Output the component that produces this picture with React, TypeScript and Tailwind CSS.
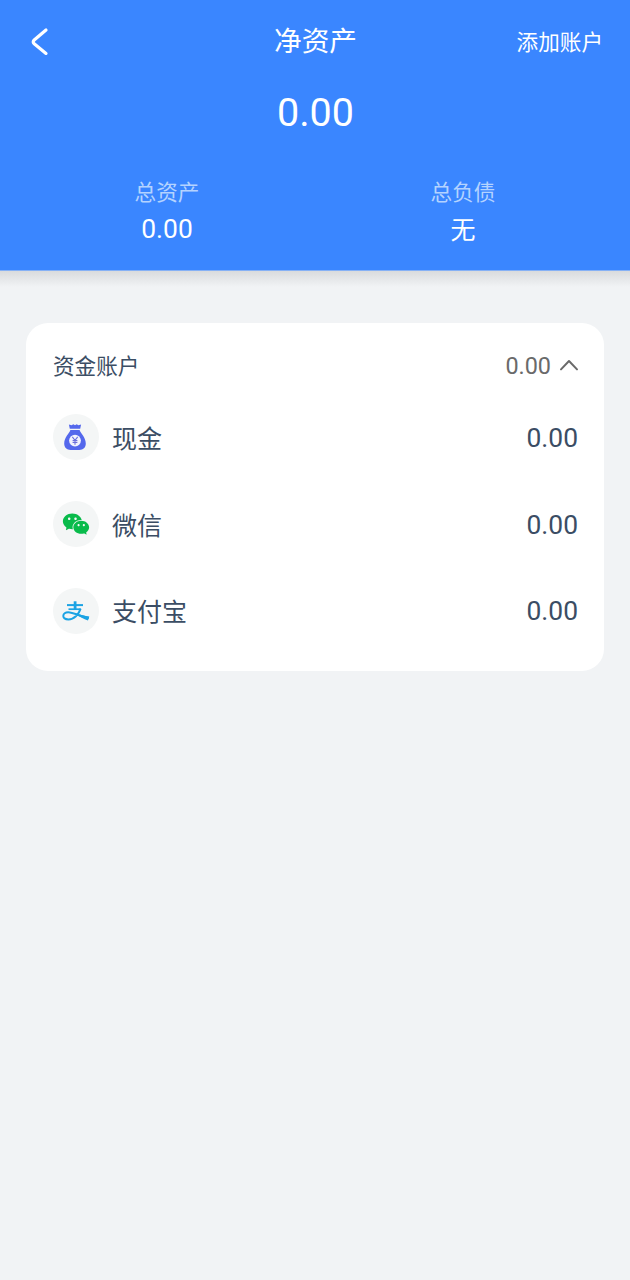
import type { ReactNode } from 'react'
import { AiFillWechat } from 'react-icons/ai'

function MoneyBagIcon() {
  return (
    <svg viewBox="0 0 24 28" className="mr-0.5 h-7 w-6" fill="none">
      <path
        d="M5.9 1.4 L8.6 2.3 L10.3 1.3 L12 2.2 L13.7 1.3 L15.4 2.3 L18.1 1.4 L17.2 5.8 H6.8 Z"
        fill="#5468ec"
      />
      <path
        d="M7.4 7 H16.6 C17.4 10 22.8 14.2 22.8 20.6 C22.8 25 20 27 16.4 27 H7.6 C4 27 1.2 25 1.2 20.6 C1.2 14.2 6.6 10 7.4 7 Z"
        fill="#5468ec"
      />
      <circle cx="12" cy="17.6" r="5.9" fill="#f2f3fd" />
      <path
        d="M9.3 13.8 L12 17.3 L14.7 13.8 M12 17.3 V21.8 M9.6 17.5 H14.4 M9.6 19.4 H14.4"
        stroke="#6c70dc"
        strokeWidth="1.1"
      />
    </svg>
  )
}

function AlipayIcon() {
  return (
    <svg viewBox="0 0 28 24" className="h-6 w-7" fill="none" stroke="#1ba3e4">
      <path d="M5 6.1 H21" strokeWidth="2" />
      <path d="M13.1 2.3 V10" strokeWidth="2.8" />
      <path d="M6.5 10.2 H18.7" strokeWidth="1.7" />
      <path
        d="M18.6 9.6 C16.8 15.5 12 20.4 6.4 20.4 C2.9 20.4 1.3 18.8 1.3 16.9 C1.3 14.7 3.4 13.2 6.2 13.2 C11.5 13.2 18.5 17.6 26.8 19.1"
        strokeWidth="2"
      />
      <path d="M14.4 14.2 C18.4 15.9 22.8 17 27.3 17.4 L26 21.5 C21.5 20.2 17.6 17.8 14.4 15.6 Z" fill="#1ba3e4" stroke="none" />
    </svg>
  )
}

const ACCOUNTS: { name: string; amount: string; icon: ReactNode }[] = [
  { name: '现金', amount: '0.00', icon: <MoneyBagIcon /> },
  { name: '微信', amount: '0.00', icon: <AiFillWechat className="h-[30px] w-[30px] text-[#09bb4b]" /> },
  { name: '支付宝', amount: '0.00', icon: <AlipayIcon /> },
]

export default function App() {
  return (
    <div className="min-h-screen bg-[#f1f3f5] font-[Roboto,'Noto_Sans_CJK_SC',sans-serif]">
      {/* Header */}
      <header className="h-[271px] border-b border-[#86b1f5] bg-[#3a86ff] text-white">
        <div className="grid h-[84px] grid-cols-3 items-center pr-[27px] pl-[29px]">
          <button aria-label="返回" className="justify-self-start">
            <svg viewBox="0 0 20 30" className="h-[30px] w-5" fill="none" stroke="currentColor" strokeWidth="3.2" strokeLinecap="round" strokeLinejoin="round">
              <path d="M17 3 L5.2 13 Q3.2 14.9 5.2 16.8 L17 26.4" />
            </svg>
          </button>
          <h1 className="pr-px text-center text-[27.7px] leading-none">净资产</h1>
          <button className="justify-self-end pt-0.5 text-[21.6px] leading-none">添加账户</button>
        </div>

        <p className="mt-2 pl-px text-center text-[39.5px] leading-[42px]">0.00</p>

        <div className="mt-[44px] flex px-[19px] text-center">
          <div className="flex-1">
            <p className="text-[21.6px] leading-[30px] text-[#b4d3ff]">总资产</p>
            <p className="mt-[3px] text-[26.4px] leading-9">0.00</p>
          </div>
          <div className="flex-1">
            <p className="text-[21.6px] leading-[30px] text-[#b4d3ff]">总负债</p>
            <p className="mt-[5px] text-[25px] leading-9">无</p>
          </div>
        </div>
      </header>
      <div className="h-4 bg-linear-to-b from-[#d9dbdd] to-[#f1f3f5]" />

      {/* Accounts */}
      <section className="mx-[26px] mt-9 h-[347.5px] rounded-[22px] bg-white pr-[26px] pl-[27px] text-[#3b4d64]">
        <div className="flex h-[84px] items-center justify-between">
          <h2 className="pt-[5px] text-[21.6px]">资金账户</h2>
          <div className="flex items-center gap-2 pt-[3px] text-[23.4px] text-[#6a6a6a]">
            <span>0.00</span>
            <svg viewBox="0 0 20 14" className="mb-[3px] -mr-px h-3.5 w-5" fill="none" stroke="currentColor" strokeWidth="2" strokeLinecap="round" strokeLinejoin="round">
              <path d="M2 11.4 L10 3 L18 11.4" />
            </svg>
          </div>
        </div>

        <ul className="mt-[7.4px] space-y-[40.6px]">
          {ACCOUNTS.map((account) => (
            <li key={account.name} className="flex h-[46px] items-center">
              <span className="flex h-[46px] w-[46px] items-center justify-center rounded-full bg-[#f4f6f6]">
                {account.icon}
              </span>
              <span className="ml-[13px] pt-[5px] text-[25px]">{account.name}</span>
              <span className="ml-auto pt-[3px] text-[26.4px]">{account.amount}</span>
            </li>
          ))}
        </ul>
      </section>
    </div>
  )
}
